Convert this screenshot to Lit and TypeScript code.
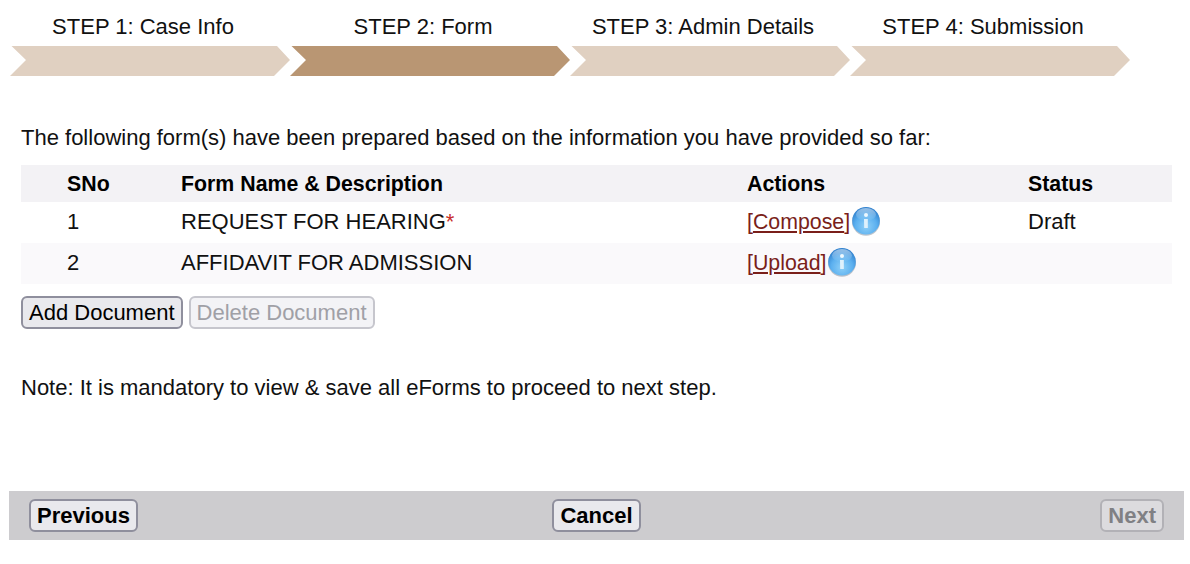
import { LitElement, html, css } from "lit";
import { customElement } from "lit/decorators.js";

const info = (id: string) => html`<svg class="info" viewBox="0 0 30 30" aria-hidden="true">
  <defs>
    <radialGradient id="g${id}" cx="50%" cy="70%" r="65%">
      <stop offset="0%" stop-color="#8fd0f8"></stop>
      <stop offset="60%" stop-color="#5cb0ef"></stop>
      <stop offset="100%" stop-color="#3182cf"></stop>
    </radialGradient>
    <linearGradient id="h${id}" x1="0" y1="0" x2="0" y2="1">
      <stop offset="0%" stop-color="#ffffff" stop-opacity=".5"></stop>
      <stop offset="100%" stop-color="#ffffff" stop-opacity="0"></stop>
    </linearGradient>
  </defs>
  <circle cx="15" cy="15.8" r="14" fill="#5f6f80" opacity=".4"></circle>
  <circle cx="15" cy="14.8" r="13.8" fill="url(#g${id})"></circle>
  <ellipse cx="15" cy="8.5" rx="10" ry="6.5" fill="url(#h${id})"></ellipse>
  <circle cx="15" cy="9" r="2" fill="#eef8fe"></circle>
  <path d="M13 13h3.8v9h-3.6z" fill="#dff1fc"></path>
</svg>`;

@customElement("app-root")
export class AppRoot extends LitElement {
  static styles = css`
    :host {
      display: block;
      width: 1190px;
      height: 564px;
      overflow: hidden;
      background: #fff;
      color: #111;
      font: 22px/26px "Liberation Sans", Arial, sans-serif;
    }
    .steps {
      display: grid;
      grid-template-columns: repeat(4, 280px);
      padding: 14px 0 0 3px;
    }
    .label {
      text-align: center;
    }
    .bar {
      width: 280px;
      height: 30px;
      margin: 6px 0 0 7px;
      background: #e0d0c1;
      clip-path: polygon(1.5px 0, 267px 0, 280px 14px, 264px 100%, 0 100%, 16px 14px);
    }
    .active .bar {
      background: #b99673;
    }
    .content {
      padding: 0 18px 0 21px;
    }
    .intro {
      margin: 49px 0 14px;
    }
    table {
      width: 100%;
      table-layout: fixed;
      border-collapse: collapse;
    }
    th,
    td {
      padding: 0;
      text-align: left;
      vertical-align: middle;
    }
    .c1 { width: 160px; padding-left: 46px; box-sizing: border-box; }
    .c2 { width: 566px; }
    .c3 { width: 281px; }
    thead tr {
      height: 37px;
      background: #f3f2f5;
    }
    th {
      color: #000;
      font-size: 21.33px;
    }
    tbody tr {
      height: 41px;
    }
    tbody td {
      padding-bottom: 2px;
    }
    tbody tr:nth-child(2) {
      background: #faf9fb;
    }
    tbody td.num {
      padding-left: 46px;
    }
    .req {
      color: #c8302c;
    }
    .action {
      display: flex;
      align-items: center;
      color: #7a1f1a;
      font-size: 21.33px;
    }
    .action a {
      color: inherit;
      text-decoration: underline;
    }
    .info {
      width: 30px;
      height: 30px;
      flex: none;
      margin: -1px 0 0 1px;
    }
    .buttons {
      display: flex;
      gap: 6px;
      margin-top: 12px;
    }
    button {
      height: 33px;
      padding: 0 6px;
      border: 2px solid #8f8f9d;
      border-radius: 6px;
      background: #e9e9ed;
      color: #000;
      font: inherit;
      line-height: 26px;
    }
    button:disabled {
      border-color: #c6c6cd;
      background: #f3f3f6;
      color: #a0a0a6;
    }
    .note {
      margin: 46px 0 0;
    }
    .footer {
      display: grid;
      grid-template-columns: 1fr auto 1fr;
      align-items: center;
      height: 49px;
      margin: 90px 6px 0 9px;
      padding: 0 20px;
      background: #cdcccf;
    }
    .footer button {
      font-weight: bold;
      color: #000;
    }
    .footer .left { justify-self: start; }
    .footer .right { justify-self: end; }
    .footer button:disabled {
      background: #dcdbde;
      border-color: #b2b1b6;
      color: #808084;
    }
  `;

  render() {
    const steps = ["STEP 1: Case Info", "STEP 2: Form", "STEP 3: Admin Details", "STEP 4: Submission"];
    return html`
      <div class="steps">
        ${steps.map(
          (s, i) => html`<div class=${i === 1 ? "step active" : "step"}>
            <div class="label">${s}</div>
            <div class="bar"></div>
          </div>`
        )}
      </div>
      <div class="content">
        <p class="intro">The following form(s) have been prepared based on the information you have provided so far:</p>
        <table>
          <thead>
            <tr>
              <th class="c1">SNo</th>
              <th class="c2">Form Name &amp; Description</th>
              <th class="c3">Actions</th>
              <th>Status</th>
            </tr>
          </thead>
          <tbody>
            <tr>
              <td class="num">1</td>
              <td>REQUEST FOR HEARING<span class="req">*</span></td>
              <td><div class="action"><span>[<a href="#">Compose</a>]</span>${info("a")}</div></td>
              <td>Draft</td>
            </tr>
            <tr>
              <td class="num">2</td>
              <td>AFFIDAVIT FOR ADMISSION</td>
              <td><div class="action"><span>[<a href="#">Upload</a>]</span>${info("b")}</div></td>
              <td></td>
            </tr>
          </tbody>
        </table>
        <div class="buttons">
          <button>Add Document</button>
          <button disabled>Delete Document</button>
        </div>
        <p class="note">Note: It is mandatory to view &amp; save all eForms to proceed to next step.</p>
      </div>
      <div class="footer">
        <button class="left">Previous</button>
        <button>Cancel</button>
        <button class="right" disabled>Next</button>
      </div>
    `;
  }
}
